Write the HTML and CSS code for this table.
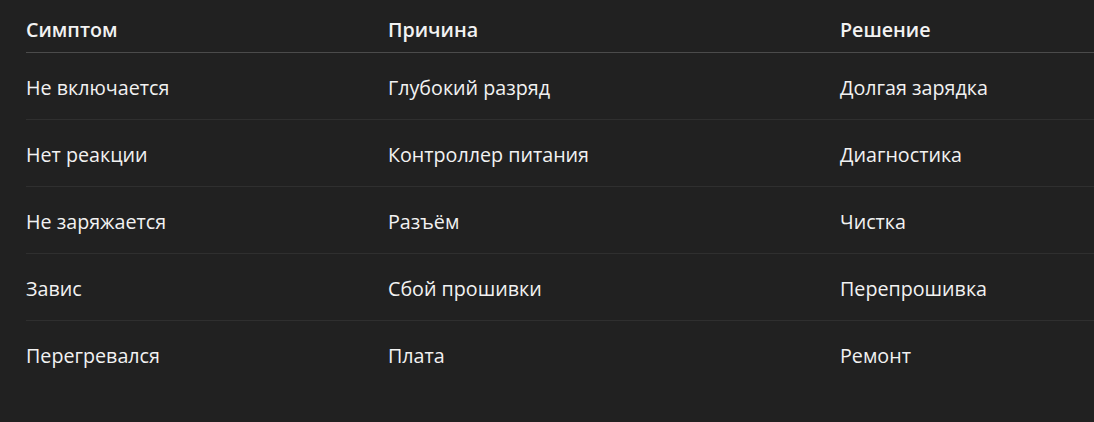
FILE: index.html
```html
<!DOCTYPE html>
<html lang="ru">
<head>
<meta charset="utf-8">
<link rel="stylesheet" href="styles.css">
</head>
<body>
<table class="diag">
  <colgroup><col class="c1"><col class="c2"><col class="c3"></colgroup>
  <thead>
    <tr><th>Симптом</th><th>Причина</th><th>Решение</th></tr>
  </thead>
  <tbody>
    <tr><td>Не включается</td><td>Глубокий разряд</td><td>Долгая зарядка</td></tr>
    <tr><td>Нет реакции</td><td>Контроллер питания</td><td>Диагностика</td></tr>
    <tr><td>Не заряжается</td><td>Разъём</td><td>Чистка</td></tr>
    <tr><td>Завис</td><td>Сбой прошивки</td><td>Перепрошивка</td></tr>
    <tr><td>Перегревался</td><td>Плата</td><td>Ремонт</td></tr>
  </tbody>
</table>
</body>
</html>
```

FILE: styles.css
```css
html, body {
  margin: 0;
  background: #212121;
}
body {
  padding: 0 0 0 26px;
  font-family: "Open Sans", "Noto Sans", sans-serif;
  color: #f2f2f2;
}
.diag {
  width: 100%;
  border-collapse: collapse;
  table-layout: fixed;
  font-size: 19.7px;
  line-height: 26px;
}
.c1 { width: 362px; }
.c2 { width: 452px; }
.diag th {
  text-align: left;
  font-weight: 600;
  height: 52px;
  padding: 8px 0 0 0;
  vertical-align: middle;
  box-sizing: border-box;
  border-bottom: 1px solid #4b4b4b;
}
.diag td {
  height: 67px;
  padding: 4px 0 0 0;
  box-sizing: border-box;
  vertical-align: middle;
  border-bottom: 1px solid #2f2f2f;
}
.diag tbody tr:last-child td {
  border-bottom: none;
}
```
